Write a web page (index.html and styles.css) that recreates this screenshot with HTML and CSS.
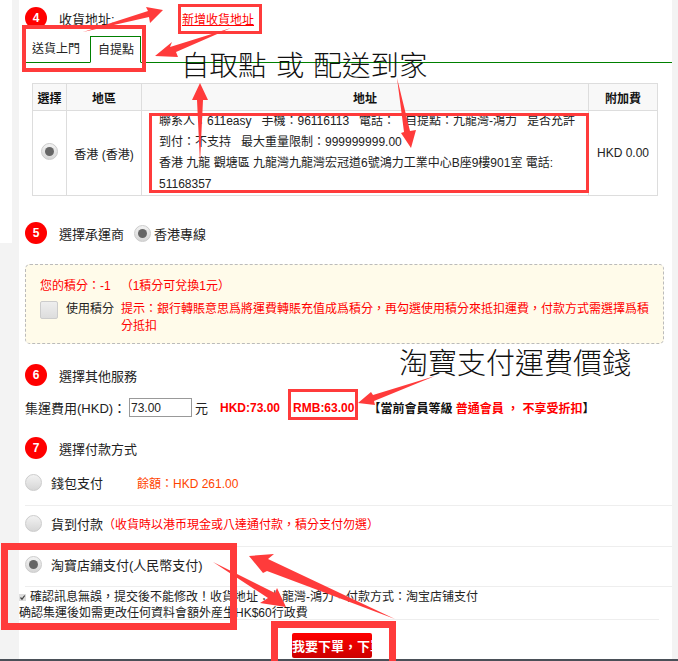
FILE: index.html
```html
<!DOCTYPE html>
<html lang="zh-Hant">
<head>
    <meta charset="UTF-8">
    <title>結算</title>
    <link rel="stylesheet" href="styles.css">
</head>
<body>
    <div class="page">
        <div class="side"></div>
        <div class="main">
            <div class="step step-4">
                <span class="badge">4</span>
                <span class="step-title">收貨地址:</span>
                <a class="add-link" href="#">新增收貨地址</a>
            </div>
            <div class="tabs">
                <span class="tab">送貨上門</span>
                <span class="tab active">自提點</span>
            </div>
            <table class="address-table">
                <tr>
                    <th class="col-pick">選擇</th>
                    <th class="col-area">地區</th>
                    <th>地址</th>
                    <th class="col-fee">附加費</th>
                </tr>
                <tr>
                    <td><span class="radio on"></span></td>
                    <td>香港 (香港)</td>
                    <td class="address">
                        <p>聯系人：611easy&nbsp;&nbsp; 手機：96116113&nbsp;&nbsp; 電話：&nbsp;&nbsp; 自提點：九龍灣-鴻力&nbsp;&nbsp; 是否允許到付：不支持&nbsp;&nbsp; 最大重量限制：999999999.00</p>
                        <p>香港 九龍 觀塘區 九龍灣九龍灣宏冠道6號鴻力工業中心B座9樓901室 電話: 51168357</p>
                    </td>
                    <td>HKD 0.00</td>
                </tr>
            </table>

            <div class="step step-5">
                <span class="badge">5</span>
                <span class="step-title">選擇承運商</span>
                <span class="radio on"></span>
                <span class="step-title">香港專線</span>
            </div>

            <div class="points">
                <div class="points-line">您的積分：-1 &nbsp;&nbsp;（1積分可兌換1元）</div>
                <div class="points-use">
                    <span class="check-big"></span>
                    <span class="points-label">使用積分</span>
                    <span class="points-tip">提示：銀行轉賬意思爲將運費轉賬充值成爲積分，再勾選使用積分來抵扣運費，付款方式需選擇爲積分抵扣</span>
                </div>
            </div>

            <div class="step step-6">
                <span class="badge">6</span>
                <span class="step-title">選擇其他服務</span>
            </div>
            <div class="fee-row">
                <span class="fee-label">集運費用(HKD)：</span>
                <input class="fee-input" type="text" value="73.00">
                <span class="fee-unit">元</span>
                <b class="fee-hkd">HKD:73.00</b>
                <b class="fee-rmb">RMB:63.00</b>
                <b class="member">【當前會員等級 <em>普通會員 ， 不享受折扣</em>】</b>
            </div>

            <div class="step step-7">
                <span class="badge">7</span>
                <span class="step-title">選擇付款方式</span>
            </div>
            <div class="pay-row pay-wallet">
                <span class="radio"></span>
                <span class="pay-name">錢包支付</span>
                <span class="pay-balance">餘額：HKD 261.00</span>
            </div>
            <div class="pay-row pay-cod">
                <span class="radio"></span>
                <span class="pay-name">貨到付款</span>
                <span class="pay-note">（收貨時以港币現金或八達通付款，積分支付勿選）</span>
            </div>
            <div class="pay-row pay-taobao">
                <span class="radio on"></span>
                <span class="pay-name">淘寶店鋪支付(人民幣支付)</span>
            </div>
            <div class="confirm">
                <div class="confirm-line">
                    <svg class="check-small" width="7" height="7" viewBox="0 0 7 7">
                        <rect x="0" y="0" width="7" height="7" fill="#ddd"/>
                        <path d="M1.5 3.5 L3 5.2 L5.8 1.5" fill="none" stroke="#444" stroke-width="1.2"/>
                    </svg>
                    確認訊息無誤，提交後不能修改！收貨地址：九龍灣-鴻力，付款方式：淘宝店铺支付
                </div>
                <div>确認集運後如需更改任何資料會額外産生HK$60行政費</div>
            </div>
            <div class="submit-row">
                <button class="submit" type="button">我要下單，下單</button>
            </div>
        </div>
    </div>
    <div class="bottom-bar"></div>

    <!-- red markup drawn on top of the screenshot -->
    <div class="notes">
        <div class="note-box box-link"></div>
        <div class="note-box box-tabs"></div>
        <div class="note-box box-address"></div>
        <div class="note-box box-rmb"></div>
        <div class="note-box box-pay"></div>
        <div class="note-box box-submit"></div>
        <svg class="arrows" width="678" height="661" viewBox="0 0 678 661">
            <polygon points="83,32 148,11 146,7 163,10 150,23 149,17"/>
            <polygon points="231,28 170,47 172,42 155,56 178,57 176,52"/>
            <polygon points="200,163 197,100 192,100 200,83 208,100 203,100"/>
            <polygon points="397,78 410,131 416,130 411,148 401,133 404,132"/>
            <polygon points="435,376 373,395 371,392 358,403 375,405 374,401"/>
            <polygon points="395,619 268,559 274,554 249,556 263,573 267,571"/>
            <polygon points="213,562 275,593 277,588 286,607 260,603 268,598"/>
        </svg>
        <div class="note-text text-pickup">自取點 或 配送到家</div>
        <div class="note-text text-taobao">淘寶支付運費價錢</div>
    </div>
</body>
</html>
```

FILE: styles.css
```css
html, body {
    margin: 0;
    padding: 0;
}

body {
    position: relative;
    width: 678px;
    height: 661px;
    overflow: hidden;
    background-color: #f3f3f3;
    font-family: "Liberation Sans", "Noto Sans CJK TC", sans-serif;
    font-size: 12px;
    color: #222;
}

.page {
    display: flex;
    height: 659px;
}

.side {
    width: 12px;
    height: 243px;
    margin-right: 7px;
    background-color: #fff;
}

.main {
    width: 653px;
    height: 659px;
    box-sizing: border-box;
    padding-left: 6px;
    overflow: hidden;
    background-color: #fff;
}

.bottom-bar {
    height: 2px;
    background-color: #4a5058;
}

/* step headings */
.step {
    display: flex;
    align-items: center;
    height: 22px;
}

.step-4 {
    margin-top: 7px;
}

.step-5 {
    margin-top: 26px;
}

.step-6 {
    margin-top: 20px;
}

.step-7 {
    margin-top: 20px;
}

.badge {
    width: 22px;
    height: 22px;
    margin-right: 12px;
    border-radius: 50%;
    background-color: #f00;
    color: #fff;
    font-size: 12px;
    font-weight: bold;
    line-height: 22px;
    text-align: center;
}

.step-title {
    font-size: 13px;
}

.step-4 .step-title {
    width: 123px;
}

.add-link {
    color: #f00;
    font-size: 12px;
}

/* tabs */
.tabs {
    display: flex;
    height: 26px;
    margin-top: 7px;
    border-bottom: 1px solid #008000;
}

.tab {
    padding: 0 10px 0 7px;
    font-size: 12px;
    line-height: 26px;
}

.tab.active {
    height: 25px;
    padding: 0 6px 0 7px;
    background-color: #fff;
    border: 1px solid #008000;
    border-bottom: 1px solid #fff;
}

/* address table */
.address-table {
    width: 626px;
    margin: 20px 0 0 7px;
    border-collapse: collapse;
    table-layout: fixed;
    font-size: 12px;
}

.address-table th,
.address-table td {
    border: 1px solid #ddd;
    text-align: center;
    padding: 0;
}

.address-table th {
    height: 26px;
    background-color: #f8f8f8;
    color: #111;
}

.address-table td {
    height: 84px;
}

.col-pick {
    width: 33px;
}

.col-area {
    width: 74px;
}

.col-fee {
    width: 68px;
}

.address-table .address {
    padding: 0 9px 0 17px;
    text-align: left;
}

.address p {
    margin: 0;
    line-height: 21px;
}

/* form controls */
.radio {
    display: inline-block;
    position: relative;
    width: 17px;
    height: 17px;
    box-sizing: border-box;
    border: 1px solid #ccc;
    border-radius: 50%;
    background: linear-gradient(#f2f2f2, #d6d6d6);
    flex: none;
}

.radio.on::after {
    content: "";
    position: absolute;
    left: 3px;
    top: 3px;
    width: 9px;
    height: 9px;
    border-radius: 50%;
    background-color: #666;
}

.step-5 .radio {
    margin: 0 3px 0 10px;
}

/* points box */
.points {
    width: 639px;
    height: 80px;
    box-sizing: border-box;
    margin-top: 20px;
    padding: 12px 0 0 14px;
    background-color: #fffbea;
    border: 1px dashed #bbb;
    border-radius: 5px;
    color: #f00;
}

.points-line {
    line-height: 18px;
}

.points-use {
    display: flex;
    margin-top: 6px;
}

.check-big {
    width: 18px;
    height: 18px;
    flex: none;
    box-sizing: border-box;
    border: 1px solid #ccc;
    border-radius: 2px;
    background: linear-gradient(#eee, #ddd);
}

.points-label {
    margin: 0 7px 0 8px;
    color: #222;
    line-height: 17px;
    flex: none;
}

.points-tip {
    width: 530px;
    line-height: 17px;
}

/* fee row */
.fee-row {
    display: flex;
    align-items: center;
    height: 19px;
    margin-top: 12px;
    white-space: nowrap;
}

.fee-label {
    width: 104px;
    font-size: 13px;
}

.fee-input {
    width: 63px;
    height: 19px;
    box-sizing: border-box;
    margin: 0;
    padding: 0 1px;
    border: 1px solid #999;
    font-family: inherit;
    font-size: 12px;
    color: #222;
}

.fee-unit {
    margin: 0 12px 0 3px;
    font-size: 13px;
}

.fee-hkd,
.fee-rmb {
    color: #f00;
    font-size: 12px;
}

.fee-rmb {
    margin: 0 14px 0 13px;
}

.member {
    font-size: 12px;
    color: #111;
}

.member em {
    font-style: normal;
    color: #f00;
}

/* payment rows */
.pay-row {
    display: flex;
    align-items: center;
    box-sizing: border-box;
    border-bottom: 1px solid #eee;
    font-size: 13px;
}

.pay-wallet {
    height: 47px;
}

.pay-cod {
    height: 41px;
    padding-bottom: 6px;
}

.pay-taobao {
    height: 40px;
    padding-bottom: 4px;
}

.pay-row .radio {
    margin-right: 9px;
}

.pay-balance {
    margin-left: 34px;
    color: #f40;
    font-size: 12px;
}

.pay-note {
    color: #f00;
    font-size: 12px;
}

.confirm {
    height: 33px;
    box-sizing: border-box;
    width: 640px;
    margin-left: -6px;
    padding-top: 2px;
    border-bottom: 1px solid #eee;
    font-size: 12px;
    line-height: 16px;
    white-space: nowrap;
}

.confirm-line {
    display: flex;
    align-items: center;
}

.check-small {
    margin-right: 4px;
}

.submit-row {
    margin-left: 267px;
    padding-top: 13px;
}

.submit {
    display: block;
    width: 80px;
    height: 25px;
    padding: 0;
    overflow: hidden;
    border: 0;
    border-radius: 2px;
    background: linear-gradient(#f00, #c00);
    color: #fff;
    font-family: inherit;
    font-size: 13px;
    font-weight: bold;
    text-align: left;
    white-space: nowrap;
}

/* markup layer */
.notes {
    position: absolute;
    left: 0;
    top: 0;
    width: 678px;
    height: 661px;
    pointer-events: none;
}

.note-box {
    position: absolute;
    box-sizing: border-box;
    border: 3px solid #ff3b3b;
}

.box-link {
    left: 178px;
    top: 4px;
    width: 84px;
    height: 30px;
}

.box-tabs {
    left: 22px;
    top: 25px;
    width: 124px;
    height: 47px;
    border-width: 4px;
}

.box-address {
    left: 149px;
    top: 113px;
    width: 440px;
    height: 80px;
}

.box-rmb {
    left: 288px;
    top: 389px;
    width: 70px;
    height: 31px;
}

.box-pay {
    left: 1px;
    top: 543px;
    width: 236px;
    height: 87px;
    border-width: 7px;
}

.box-submit {
    left: 271px;
    top: 621px;
    width: 125px;
    height: 40px;
    border-width: 7px;
    border-bottom-width: 0;
}

.arrows {
    position: absolute;
    left: 0;
    top: 0;
}

.arrows polygon {
    fill: #ff3b3b;
}

.note-text {
    position: absolute;
    color: #111;
    font-family: "Noto Sans CJK TC", sans-serif;
    font-weight: 300;
    white-space: nowrap;
}

.text-pickup {
    left: 181px;
    top: 44px;
    font-size: 28.5px;
    line-height: 40px;
    word-spacing: 3px;
}

.text-taobao {
    left: 399px;
    top: 341px;
    font-size: 29px;
    line-height: 40px;
}
```
